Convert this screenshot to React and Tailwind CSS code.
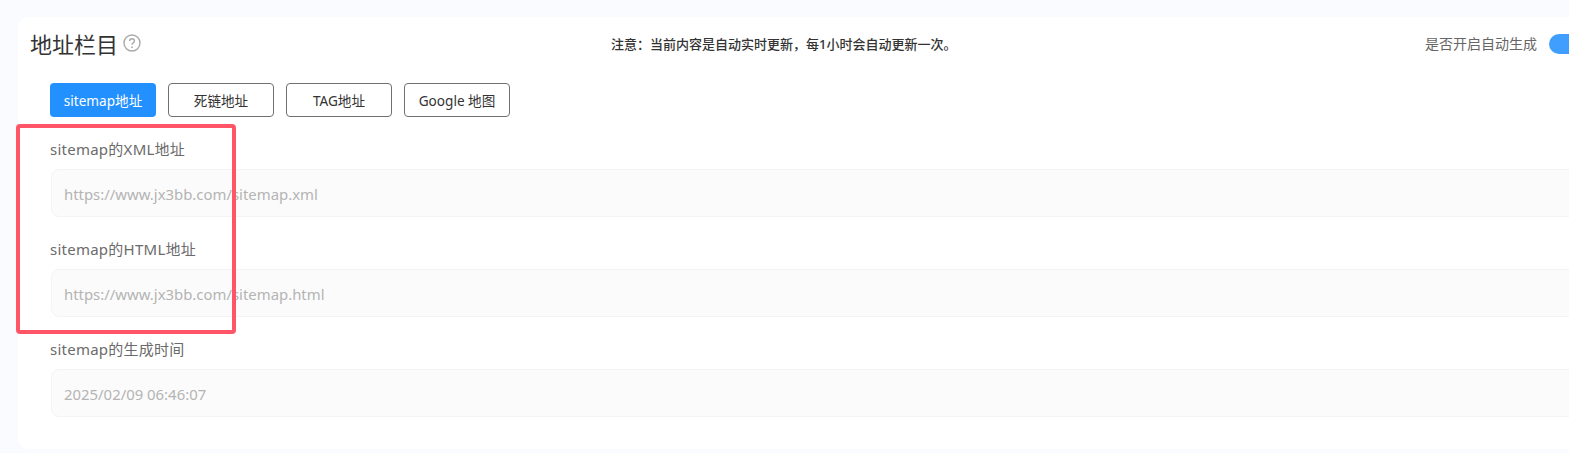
const tabs = [
  { label: 'sitemap地址', active: true },
  { label: '死链地址' },
  { label: 'TAG地址' },
  { label: 'Google 地图' },
];

const fields = [
  { label: 'sitemap的XML地址', value: 'https://www.jx3bb.com/sitemap.xml' },
  { label: 'sitemap的HTML地址', value: 'https://www.jx3bb.com/sitemap.html' },
  { label: 'sitemap的生成时间', value: '2025/02/09 06:46:07' },
];

function HelpIcon() {
  return (
    <svg viewBox="0 0 18 18" className="h-[18px] w-[18px] text-[#aaa]" fill="none" stroke="currentColor">
      <circle cx="9" cy="9" r="8" strokeWidth="1.4" />
      <path d="M6.6 7.1c0-1.4 1-2.3 2.4-2.3s2.4.9 2.4 2.2c0 1.9-2.4 1.9-2.4 3.8" strokeWidth="1.4" />
      <circle cx="9" cy="13.2" r=".9" fill="currentColor" stroke="none" />
    </svg>
  );
}

export default function App() {
  return (
    <div className="relative h-[453px] w-full overflow-hidden bg-[#f9fbff] pl-[18px] pt-[17px] font-['Noto_Sans','Noto_Sans_CJK_SC',sans-serif]">
      <div className="h-[432px] w-[1620px] rounded-[10px] bg-white">
        <div className="flex h-[66px] items-center pb-3 pl-3 pr-[49px]">
          <div className="flex w-[581px] items-center">
            <h2 className="text-[22px] leading-[30px] font-normal text-[#333]">地址栏目</h2>
            <span className="mb-[3px] ml-[5px]"><HelpIcon /></span>
          </div>
          <p className="pt-0.5 text-[13px] font-medium text-[#333]">注意：当前内容是自动实时更新，每1小时会自动更新一次。</p>
          <div className="ml-auto flex items-center gap-3">
            <span className="text-sm text-[#666]">是否开启自动生成</span>
            <div className="h-5 w-10 rounded-full bg-[#409eff]" />
          </div>
        </div>

        <div className="pl-8">
          <div className="flex gap-3">
            {tabs.map((tab) => (
              <button
                key={tab.label}
                className={
                  tab.active
                    ? 'h-[34px] w-[106px] rounded-[4px] bg-[#2290ff] pt-0.5 text-[13.6px] text-white'
                    : 'h-[34px] w-[106px] rounded-[4px] border border-[#707070] bg-white pt-0.5 text-[13.6px] text-[#333]'
                }
              >
                {tab.label}
              </button>
            ))}
          </div>

          <div className="mt-[22px] flex flex-col gap-[22px]">
            {fields.map((field) => (
              <div key={field.label}>
                <label className="block h-[30px] text-[15px] leading-5 tracking-[0.25px] text-[#6b6b6b]">{field.label}</label>
                <div className="ml-px flex h-12 items-center rounded-lg border border-[#f4f4f4] bg-[#fbfbfb] pl-3 pt-[3px] text-[14.9px] text-[#b4b4b4]">
                  {field.value}
                </div>
              </div>
            ))}
          </div>
        </div>
      </div>

      <div className="absolute left-4 top-[124px] h-[210px] w-[220px] rounded-[4px] border-4 border-[#ff5567]" />
    </div>
  );
}
